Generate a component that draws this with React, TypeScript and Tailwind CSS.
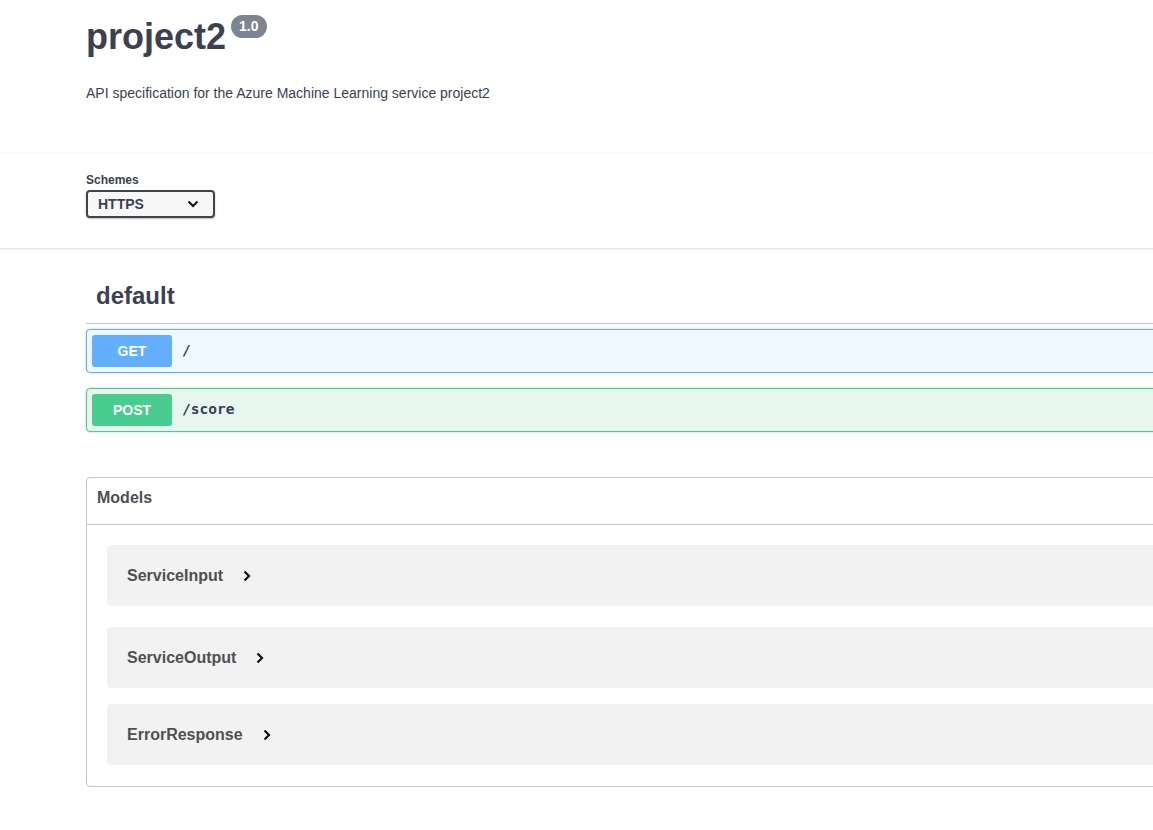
import React from 'react';

const sans = { fontFamily: '"Liberation Sans", Arial, sans-serif' };

const Chevron = ({ dir }: { dir: 'down' | 'right' }) =>
  dir === 'down' ? (
    <svg width="12" height="8" viewBox="0 0 12 8" className="shrink-0">
      <path d="M1.5 1.5 L6 6 L10.5 1.5" fill="none" stroke="#111" strokeWidth="2" />
    </svg>
  ) : (
    <svg width="8" height="12" viewBox="0 0 8 12" className="shrink-0">
      <path d="M1.5 1.5 L6 6 L1.5 10.5" fill="none" stroke="#111" strokeWidth="2.2" />
    </svg>
  );

interface OpProps {
  method: string;
  path: string;
  border: string;
  bg: string;
  badge: string;
}

const Operation: React.FC<OpProps> = ({ method, path, border, bg, badge }) => (
  <div
    className={`flex items-center border rounded-[4px] p-[5px] shadow-[0_0_3px_rgba(0,0,0,0.19)] ${border} ${bg}`}
  >
    <div
      className={`w-[80px] h-[32px] rounded-[3px] flex items-center justify-center text-white text-[14px] font-bold ${badge}`}
    >
      {method}
    </div>
    <span
      className="ml-[10px] text-[14.5px] font-bold text-[#3b4151]"
      style={{ fontFamily: '"DejaVu Sans Mono", "Liberation Mono", monospace' }}
    >
      {path}
    </span>
  </div>
);

const Model = ({ name, mb }: { name: string; mb: string }) => (
  <div className={`mx-[20px] h-[61px] rounded-[4px] bg-[#f2f2f2] flex items-center pl-[20px] gap-[20px] ${mb}`}>
    <span className="text-[16px] font-bold text-[#505050]">{name}</span>
    <Chevron dir="right" />
  </div>
);

export default function App() {
  return (
    <div className="w-[1153px] h-[830px] overflow-hidden bg-white text-[#3b4151]" style={sans}>
      <div className="w-[1460px]">
        {/* info */}
        <div className="pl-[86px] h-[152px]">
          <div className="flex items-start pt-[19px]">
            <h2 className="text-[36px] leading-[36px] font-bold text-[#3b4151]">project2</h2>
            <span className="ml-[5px] -mt-[4px] rounded-full bg-[#7d8492] text-white text-[14px] leading-[15px] font-bold px-[8px] py-[4px]">
              1.0
            </span>
          </div>
          <p className="mt-[30px] text-[14px] leading-[16px]">
            API specification for the Azure Machine Learning service project2
          </p>
        </div>

        {/* schemes */}
        <div className="border-t border-[#fafafa] shadow-[0_1px_2px_0_rgba(0,0,0,0.15)] pl-[86px] pt-[20px] pb-[30px]">
          <div className="text-[12px] leading-[14px] font-bold">Schemes</div>
          <div className="mt-[3px] w-[129px] h-[28px] border-2 border-[#41444e] rounded-[4px] bg-[#f7f7f7] shadow-[0_1px_2px_0_rgba(0,0,0,0.25)] flex items-center justify-between pl-[10px] pr-[14px]">
            <span className="text-[14px] font-bold">HTTPS</span>
            <Chevron dir="down" />
          </div>
        </div>

        <div className="pl-[86px] pr-[20px]">
          {/* default tag */}
          <div className="mt-[24px] border-b border-[#c4c6cb] pl-[10px] pt-[10px] pb-[13px]">
            <h3 className="text-[24px] leading-[28px] font-bold">default</h3>
          </div>

          <div className="mt-[5px] mb-[15px]">
            <Operation method="GET" path="/" border="border-[#61affe]" bg="bg-[#eff7ff]" badge="bg-[#61affe]" />
          </div>
          <Operation method="POST" path="/score" border="border-[#49cc90]" bg="bg-[#e8f6f0]" badge="bg-[#49cc90]" />

          {/* models */}
          <div className="mt-[45px] border border-[#c4c6cb] rounded-[4px]">
            <div className="h-[47px] border-b border-[#c4c6cb] pl-[10px] pt-[11px]">
              <h4 className="text-[16px] leading-[18px] font-bold text-[#505050]">Models</h4>
            </div>
            <div className="pt-[20px] pb-[21px]">
              <Model name="ServiceInput" mb="mb-[21px]" />
              <Model name="ServiceOutput" mb="mb-[16px]" />
              <Model name="ErrorResponse" mb="" />
            </div>
          </div>
        </div>
      </div>
    </div>
  );
}
